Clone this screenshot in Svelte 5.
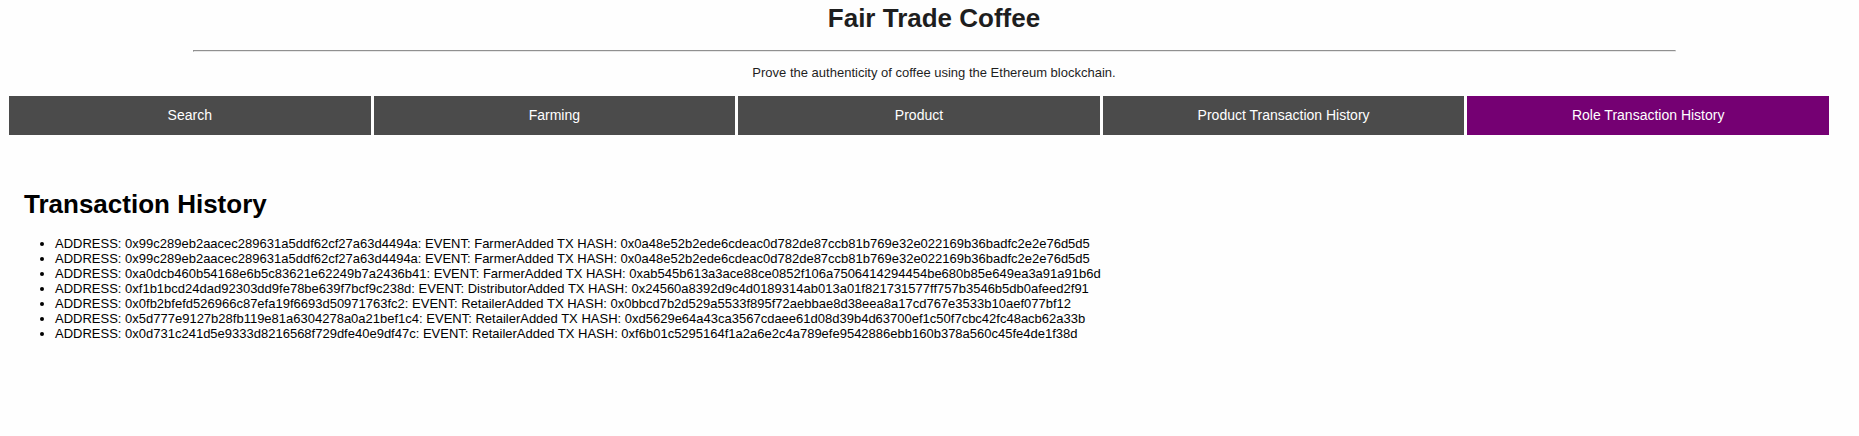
<script>
  const tabs = ['Search', 'Farming', 'Product', 'Product Transaction History', 'Role Transaction History'];
  let active = $state('Role Transaction History');

  const events = [
    { address: '0x99c289eb2aacec289631a5ddf62cf27a63d4494a', name: 'FarmerAdded', hash: '0x0a48e52b2ede6cdeac0d782de87ccb81b769e32e022169b36badfc2e2e76d5d5' },
    { address: '0x99c289eb2aacec289631a5ddf62cf27a63d4494a', name: 'FarmerAdded', hash: '0x0a48e52b2ede6cdeac0d782de87ccb81b769e32e022169b36badfc2e2e76d5d5' },
    { address: '0xa0dcb460b54168e6b5c83621e62249b7a2436b41', name: 'FarmerAdded', hash: '0xab545b613a3ace88ce0852f106a7506414294454be680b85e649ea3a91a91b6d' },
    { address: '0xf1b1bcd24dad92303dd9fe78be639f7bcf9c238d', name: 'DistributorAdded', hash: '0x24560a8392d9c4d0189314ab013a01f821731577ff757b3546b5db0afeed2f91' },
    { address: '0x0fb2bfefd526966c87efa19f6693d50971763fc2', name: 'RetailerAdded', hash: '0x0bbcd7b2d529a5533f895f72aebbae8d38eea8a17cd767e3533b10aef077bf12' },
    { address: '0x5d777e9127b28fb119e81a6304278a0a21bef1c4', name: 'RetailerAdded', hash: '0xd5629e64a43ca3567cdaee61d08d39b4d63700ef1c50f7cbc42fc48acb62a33b' },
    { address: '0x0d731c241d5e9333d8216568f729dfe40e9df47c', name: 'RetailerAdded', hash: '0xf6b01c5295164f1a2a6e2c4a789efe9542886ebb160b378a560c45fe4de1f38d' }
  ];
</script>

<div class="page">
  <header>
    <h1>Fair Trade Coffee</h1>
    <hr />
    <p>Prove the authenticity of coffee using the Ethereum blockchain.</p>
  </header>

  <nav>
    {#each tabs as tab}
      <button type="button" class:active={active === tab} onclick={() => (active = tab)}>{tab}</button>
    {/each}
  </nav>

  <main>
    <h1>Transaction History</h1>
    <ul>
      {#each events as event}
        <li>ADDRESS: {event.address}: EVENT: {event.name} TX HASH: {event.hash}</li>
      {/each}
    </ul>
  </main>
</div>

<style>
  :global(body) {
    margin: 0;
    background: #fefefe;
  }

  .page {
    padding-left: 9px;
    font-family: "Liberation Sans", Arial, sans-serif;
    font-size: 13px;
    line-height: 15px;
    color: #000;
  }

  header {
    text-align: center;
    color: #1e1e1e;
  }

  h1 {
    margin: 0;
    font-size: 26px;
    line-height: 30px;
  }

  header h1 {
    padding-top: 3px;
  }

  hr {
    width: calc(80% + 3px);
    box-sizing: border-box;
    height: 2px;
    margin: 17px auto 13px;
    border: 1px solid;
    border-color: #909090 #e8e8e8 #e8e8e8 #909090;
  }

  p {
    margin: 0;
  }

  nav {
    display: grid;
    grid-template-columns: repeat(5, 1fr);
    gap: 3px;
    margin: 16px 30px 0 0;
  }

  button {
    padding: 12px 16px;
    border: 0;
    border-radius: 0;
    background: #4b4b4b;
    color: #fff;
    font-family: inherit;
    font-size: 14px;
    line-height: 15px;
    cursor: pointer;
  }

  button.active {
    background: #750073;
  }

  main {
    padding: 54px 15px 94px;
  }

  ul {
    margin: 17px 0 0;
    padding-left: 31px;
  }
</style>
